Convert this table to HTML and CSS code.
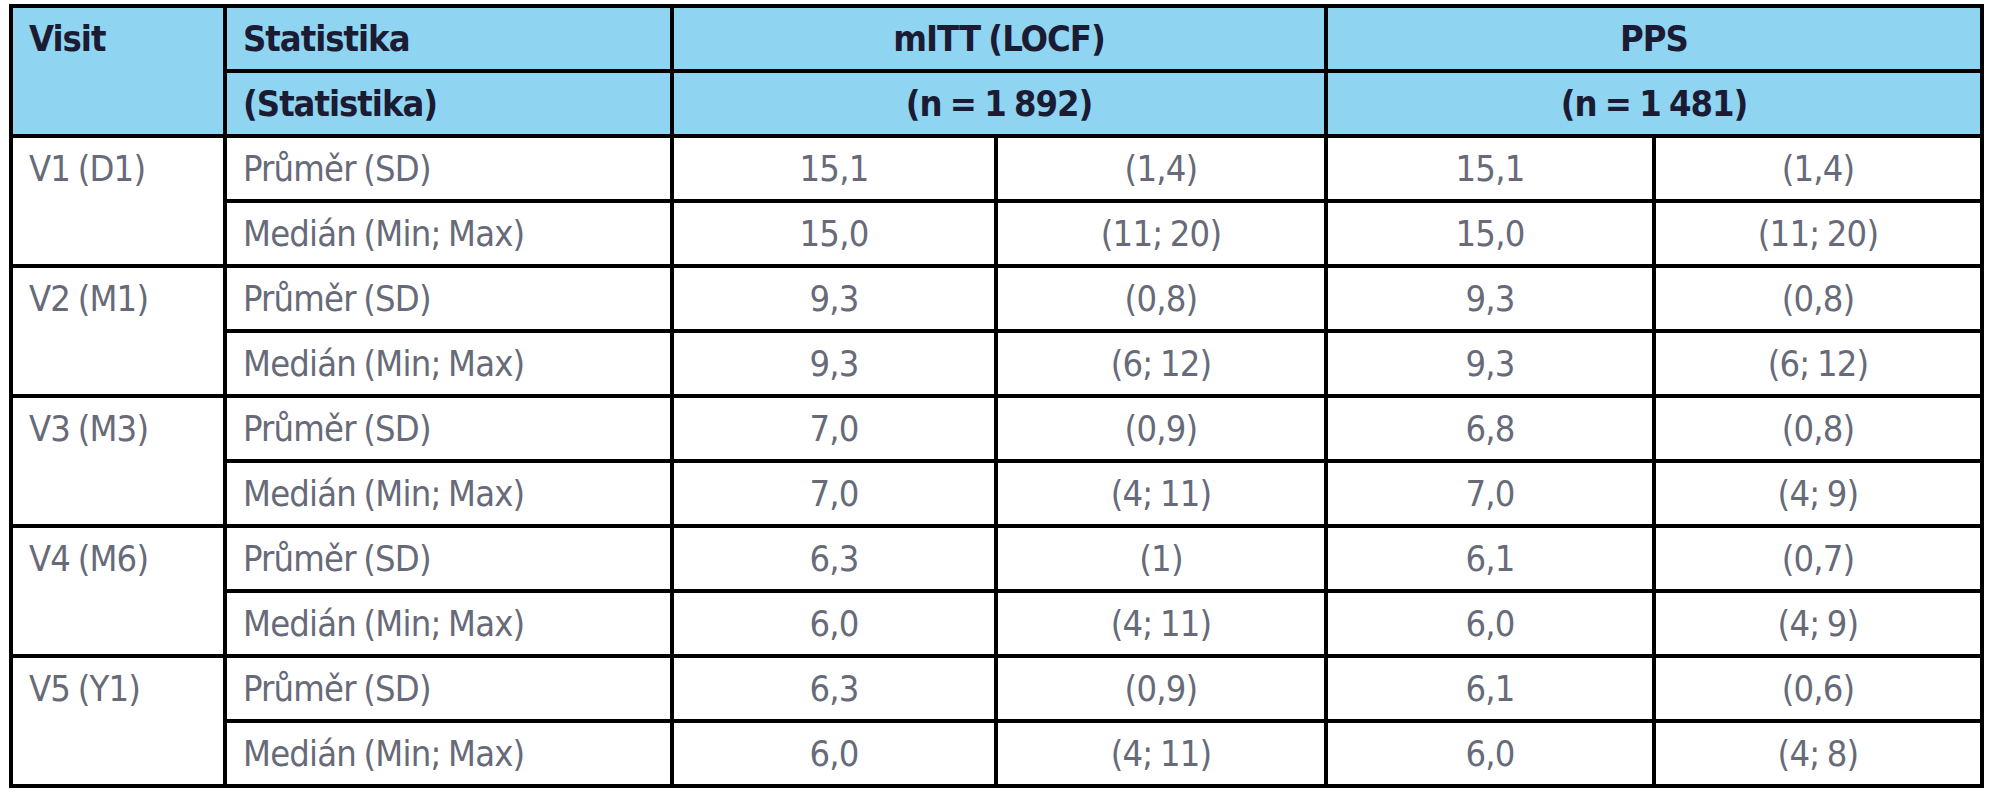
FILE: index.html
```html
<!DOCTYPE html>
<html lang="cs">
<head>
<meta charset="utf-8">
<title>Tabulka</title>
<link rel="stylesheet" href="styles.css">
</head>
<body>
<table class="data">
  <colgroup>
    <col class="c-visit">
    <col class="c-stat">
    <col class="c-mv">
    <col class="c-mp">
    <col class="c-pv">
    <col class="c-pp">
  </colgroup>
  <thead>
    <tr>
      <th rowspan="2" class="left">Visit</th>
      <th class="left">Statistika</th>
      <th colspan="2">mITT (LOCF)</th>
      <th colspan="2">PPS</th>
    </tr>
    <tr>
      <th class="left">(Statistika)</th>
      <th colspan="2">(n = 1 892)</th>
      <th colspan="2">(n = 1 481)</th>
    </tr>
  </thead>
  <tbody>
    <tr><td rowspan="2" class="left">V1 (D1)</td><td class="left">Průměr (SD)</td><td>15,1</td><td>(1,4)</td><td>15,1</td><td>(1,4)</td></tr>
    <tr><td class="left">Medián (Min; Max)</td><td>15,0</td><td>(11; 20)</td><td>15,0</td><td>(11; 20)</td></tr>
    <tr><td rowspan="2" class="left">V2 (M1)</td><td class="left">Průměr (SD)</td><td>9,3</td><td>(0,8)</td><td>9,3</td><td>(0,8)</td></tr>
    <tr><td class="left">Medián (Min; Max)</td><td>9,3</td><td>(6; 12)</td><td>9,3</td><td>(6; 12)</td></tr>
    <tr><td rowspan="2" class="left">V3 (M3)</td><td class="left">Průměr (SD)</td><td>7,0</td><td>(0,9)</td><td>6,8</td><td>(0,8)</td></tr>
    <tr><td class="left">Medián (Min; Max)</td><td>7,0</td><td>(4; 11)</td><td>7,0</td><td>(4; 9)</td></tr>
    <tr><td rowspan="2" class="left">V4 (M6)</td><td class="left">Průměr (SD)</td><td>6,3</td><td>(1)</td><td>6,1</td><td>(0,7)</td></tr>
    <tr><td class="left">Medián (Min; Max)</td><td>6,0</td><td>(4; 11)</td><td>6,0</td><td>(4; 9)</td></tr>
    <tr><td rowspan="2" class="left">V5 (Y1)</td><td class="left">Průměr (SD)</td><td>6,3</td><td>(0,9)</td><td>6,1</td><td>(0,6)</td></tr>
    <tr><td class="left">Medián (Min; Max)</td><td>6,0</td><td>(4; 11)</td><td>6,0</td><td>(4; 8)</td></tr>
  </tbody>
</table>
</body>
</html>
```

FILE: styles.css
```css
html, body {
  margin: 0;
  padding: 0;
  background: #ffffff;
}

.data {
  margin: 4px 0 0 9px;
  border-collapse: separate;
  border-spacing: 0;
  table-layout: fixed;
  width: 1975px;
  border-left: 4px solid #000;
  border-top: 4px solid #000;
  font-family: "Liberation Sans Narrow", "DejaVu Sans Condensed", "Liberation Sans", sans-serif;
  font-size: 36px;
}

.c-visit { width: 214px; }
.c-stat { width: 447px; }
.c-mv { width: 324px; }
.c-mp { width: 330px; }
.c-pv { width: 328px; }
.c-pp { width: 328px; }

.data tr {
  height: 65px;
}

.data th,
.data td {
  border-right: 4px solid #000;
  border-bottom: 4px solid #000;
  padding: 0;
  line-height: 61px;
  vertical-align: top;
  text-align: center;
  white-space: nowrap;
  overflow: hidden;
}

.data th {
  background: #8fd4f1;
  color: #1b1b33;
  font-weight: 700;
  letter-spacing: -1px;
  word-spacing: -2px;
}

.data td {
  color: #676a78;
  font-weight: 400;
  letter-spacing: -0.8px;
  word-spacing: -2px;
}

.data .left {
  text-align: left;
  padding-left: 16px;
}
```
